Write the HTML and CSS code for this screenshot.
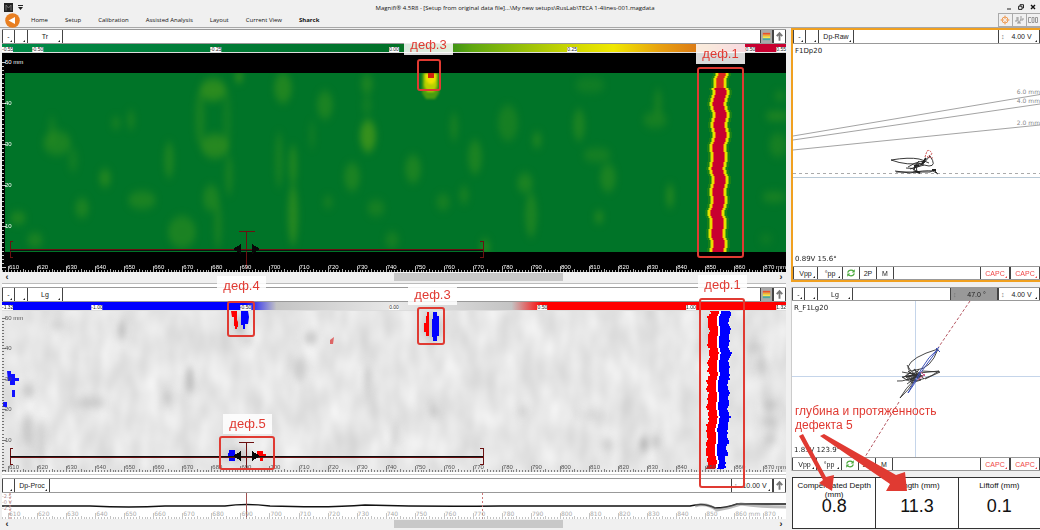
FILE: index.html
```html
<!DOCTYPE html>
<html lang="en">
<head>
<meta charset="utf-8">
<title>Magnifi 4.5R8</title>
<link rel="stylesheet" href="styles.css">
</head>
<body>
<svg class="defs" aria-hidden="true">
  <symbol id="i-up" viewBox="0 0 12 12"><path d="M6 10.5V3M3 5.5L6 2.200L9 5.500" fill="none" stroke="#777" stroke-width="2"/></symbol>
  <symbol id="i-map" viewBox="0 0 12 12"><path fill="#e8502c" d="M2 2h8v2H2z"/><path fill="#f5b02c" d="M2 4h8v2H2z"/><path fill="#f4e84a" d="M2 6h8v2H2z"/><path fill="#4aa9a0" d="M2 8h8v2H2z"/></symbol>
  <symbol id="i-sync" viewBox="0 0 12 12"><path d="M2 5.500Q3 2.500 6 2.500Q8 2.500 9.500 4M10 6.500Q9 9.500 6 9.500Q4 9.500 2.500 8" fill="none" stroke="#4aa83c" stroke-width="1.500"/><path fill="#4aa83c" d="M10.500 1.500V5.500H6.800zM1.500 10.500V6.500H5.200z"/></symbol>
</svg>
<div class="app">
  <header class="header">
    <div class="titlebar">
      <div class="quick">
        <svg class="logo" viewBox="0 0 9 9"><path fill="#222" d="M0 0h9v9H0z"/><path d="M2 7.500V2L4.500 5L7 2V7.500" fill="none" stroke="#777" stroke-width=".9"/></svg>
        <svg class="caret" viewBox="0 0 5 5"><path fill="#222" d="M0 0h5v1H0zM0 2h5L2.500 5z"/></svg>
      </div>
      <h1 class="title">Magnifi® 4.5R8 - [Setup from original data file]...\My new setups\RusLab\TECA 1-4lines-001.magdata</h1>
      <div class="window-buttons">
        <button aria-label="Minimize"><svg viewBox="0 0 6 6"><path d="M1 5h4" stroke="#222"/></svg></button>
        <button aria-label="Restore"><svg viewBox="0 0 6 6"><path d="M2 2V.7H5.500V4H4M.6 2.200H4V5.400H.6z" fill="none" stroke="#222"/></svg></button>
        <button aria-label="Close"><svg viewBox="0 0 6 6"><path d="M1 1l4 4M5 1L1 5" stroke="#111" stroke-width="1.400"/></svg></button>
      </div>
    </div>
    <nav class="menu">
      <button class="back" aria-label="Back"><svg viewBox="0 0 15 15"><circle cx="7.500" cy="7.500" r="7.300" fill="#e87f22"/><path fill="#fff" d="M3.500 7.500L10 4v7z"/></svg></button>
      <a href="#">Home</a><a href="#">Setup</a><a href="#">Calibration</a><a href="#">Assisted Analysis</a><a href="#">Layout</a><a href="#">Current View</a><a href="#" class="active">Sharck</a>
      <div class="tools">
        <button aria-label="Target"><svg viewBox="0 0 12 12"><path d="M6 1.500v9M1.500 6h9" stroke="#f0a060"/><circle cx="6" cy="6" r="3" fill="none" stroke="#ef9a50"/><circle cx="6" cy="6" r="1" fill="#fff"/></svg></button>
        <button aria-label="Signals"><svg viewBox="0 0 12 12"><path d="M2 7h2V3M5 3v4l1 2 2-4V2M8 6h2V4M4 9h4" fill="none" stroke="#999"/></svg></button>
        <button aria-label="Coils"><svg viewBox="0 0 12 12"><path d="M4 3.500H1.500v5H4M5 3.500h2v5H5zM8.500 3.500h2v5h-2z" fill="none" stroke="#999"/></svg></button>
      </div>
    </nav>
  </header>

  <main class="workspace">
    <div class="scans">
      <section class="scan scan-tr">
        <div class="toolbar">
          <button class="btn s more">-</button><button class="btn s more" aria-label="Layer"></button><button class="btn m more">Tr</button>
          <span class="grow"></span>
          <button class="btn i on" aria-label="Palette"><svg><use href="#i-map"/></svg></button><button class="btn i" aria-label="Expand"><svg><use href="#i-up"/></svg></button>
        </div>
        <div class="scale scale-tr" data-max="0.55" data-values="-0.55,-0.50,-0.25,0.00,0.25,0.50,0.55"></div>
        <div class="plot plot-dark" data-unit="870" data-top="62" data-step="41" data-height="219" data-origin="53">
          <svg class="art" id="tr" viewBox="2 53 784 219" preserveAspectRatio="none">
            <defs>
              <filter id="soft" x="-10%" y="-10%" width="120%" height="120%" color-interpolation-filters="sRGB"><feGaussianBlur stdDeviation="3 4"/></filter>
              <filter id="soft1" x="-50%" y="-50%" width="200%" height="200%" color-interpolation-filters="sRGB"><feGaussianBlur stdDeviation="1"/></filter>
              <clipPath id="field"><path d="M5 73h781v179H5z"/></clipPath>
            </defs>
            <path fill="#000" d="M2 53h784v219H2z"/>
            <path fill="#007428" d="M5 73h781v179H5z"/>
            <g clip-path="url(#field)">
              <g id="tr-spots" filter="url(#soft)" fill="#3c941c"></g>
              <g id="tr-strip" shape-rendering="crispEdges"></g>
              <g filter="url(#soft1)"><path fill="#4a9c10" d="M422 73h17v20l-4 6h-9l-4-6z"/><path fill="#b8d000" d="M424 73h13v13l-3 6h-7l-3-6z"/><path fill="#f0e000" d="M425 73h12l-1 7-3 4h-4l-3-4z"/></g>
              <path fill="#d02010" d="M428 73h6v5h-6z"/>
            </g>
            <g class="cursor"><path d="M13 241h-3v16h3M480 241h3v16h-3M246 231v38M239 231h16M10 249h473"/><path class="dark" d="M10 250h473"/><path class="arrow" d="M233 249l8-5v10zM260 249l-8-5v10z"/></g>
          </svg>
        </div>
        <div class="scrollbar"><button aria-label="Scroll left">‹</button><div class="track"><span class="thumb"></span></div><button aria-label="Scroll right">›</button></div>
      </section>

      <section class="scan scan-lg">
        <div class="toolbar">
          <button class="btn s more">-</button><button class="btn s more" aria-label="Layer"></button><button class="btn m more">Lg</button>
          <span class="grow"></span>
          <button class="btn i on" aria-label="Palette"><svg><use href="#i-map"/></svg></button><button class="btn i" aria-label="Expand"><svg><use href="#i-up"/></svg></button>
        </div>
        <div class="scale scale-lg" data-max="1.32" data-values="-1.32,-1.00,-0.50,0.00,0.50,1.00,1.32"></div>
        <div class="plot plot-light" data-unit="870" data-top="318" data-step="30.4" data-height="161" data-origin="311">
          <svg class="art" id="lg" viewBox="2 311 784 161" preserveAspectRatio="none">
            <defs>
              <filter id="grain" x="0" y="0" width="100%" height="100%" color-interpolation-filters="sRGB"><feTurbulence type="fractalNoise" baseFrequency="0.05 0.028" numOctaves="2" seed="8"/><feColorMatrix values=".15 0 0 0 .825 .15 0 0 0 .825 .15 0 0 0 .825 0 0 0 0 1"/></filter>
            </defs>
            <rect x="2" y="311" width="784" height="161" filter="url(#grain)"/>
            <g id="lg-spots" filter="url(#soft)" fill="#a0a0a0"></g>
            <g id="lg-strip" shape-rendering="crispEdges"></g>
            <path fill="#f00" d="M231 311h6v9l1 2v5h-1v2h-2v-3h-1v-9h-2zM427 312h2v24h-3v-4h-2v-9h2v-7h1zM257 451h6v3h3v3h-3v4h-3v-3h-3z"/>
            <path fill="#00f" d="M241 311h7l1 6-1 7h-3v5h-2v-4h-2zM433 312h4v4h2v20h-2v5h-4v-4h-1v-18h1zM229 450h6v11h-6v-3h-1v-5h1z"/>
            <path fill="#11f" d="M7 371h4v3h4v4h4v3h-4v4h-5v-4H8zM12 390h3v7h-3zM3 402h4v5H3z"/>
            <path fill="#d66" d="M330 340l4-3-1 7h-3z"/>
            <g class="cursor"><path d="M13 448h-3v16h3M480 448h3v16h-3M246 442v26M239 442h15M10 457h473"/><path class="dark" d="M10 456h473"/><path class="arrow" d="M233 456l8-5v10zM260 456l-8-5v10z"/></g>
          </svg>
        </div>
      </section>

      <section class="scan scan-strip">
        <div class="toolbar">
          <button class="btn s more" aria-label="Layer"></button><button class="btn m more">Dp-Proc</button>
          <span class="grow"></span>
          <label class="gain more"><span>↕</span><input aria-label="Strip gain" value="10.00 V"></label><button class="btn i" aria-label="Expand"><svg><use href="#i-up"/></svg></button>
        </div>
        <div class="plot plot-strip" data-unit="860">
          <svg class="art" viewBox="2 493 784 26" preserveAspectRatio="none">
            <path d="M2 506H90Q130 508 165 506H225Q246 503 270 506Q330 508 365 505Q430 507 500 506H690Q704 502 715 508Q726 508 737 504H786" fill="none" stroke="#111" stroke-width="1.500"/>
            <path d="M695 506Q706 502 717 510Q729 508 741 504Q760 507 786 507" fill="none" stroke="#777" opacity=".5" stroke-width="3"/>
            <path d="M246.500 493v26" stroke="#a05050"/><path d="M482.500 493v26M10 493v26" stroke="#c77" stroke-dasharray="2"/>
          </svg>
          <span class="volt">-2.5<br>-0 V<br>-2.5</span>
        </div>
        <div class="scrollbar"><button aria-label="Scroll left">‹</button><div class="track"><span class="thumb"></span></div><button aria-label="Scroll right">›</button></div>
      </section>
    </div>

    <div class="planes">
      <section class="plane selected">
        <div class="toolbar">
          <button class="btn s more">-</button><button class="btn s more" aria-label="Layer"></button><button class="btn m more">Dp-Raw</button>
          <span class="grow"></span><label class="gain more"><span>↕</span><input aria-label="Raw gain" value="4.00 V"></label>
        </div>
        <div class="lissajous lissajous-raw">
          <svg class="art" viewBox="793 44 247 222" preserveAspectRatio="none" fill="none">
            <path stroke="#999" stroke-width=".9" d="M793 136L1040 94.500M793 140L1040 104M793 150L1040 125"/>
            <path stroke="#aaa" stroke-dasharray="3 3" d="M793 173.500h247"/><path stroke="#b9c9d6" d="M793 177.500h247"/>
            <g stroke="#222" stroke-width=".9"><path d="M891 160Q909 157 919 159Q927 161 924 163Q907 166 891 160M906 168Q919 171 930 156M930 156Q937 166 929 166L919 164M908 167Q922 158 929 163M895 171L910 173Q924 170 933 171L938 174M896 172H930L934 170 937 173M914 172L915 166L919 161M917 172L916 166L913 170M924 165L910 169"/><path stroke-width="2" d="M914 166L919 165M926 158L922 164M915 171L920 173M932 170h4"/></g>
            <path stroke="#c55" stroke-dasharray="2 1" d="M925 157L927 151Q930 149 932 154L927 157L933 158"/>
          </svg>
          <strong class="caption">F1Dp20</strong><span class="readout">0.89V 15.6°</span>
          <span class="depth d6">6.0 mm</span><span class="depth d4">4.0 mm</span><span class="depth d2">2.0 mm</span>
        </div>
        <div class="toolbar foot">
          <button class="btn w more">Vpp</button><button class="btn w more">°pp</button><button class="btn t" aria-label="Refresh"><svg><use href="#i-sync"/></svg></button><button class="btn t">2P</button><button class="btn t">M</button>
          <span class="grow"></span><button class="btn c more">CAPC</button><button class="btn c more">CAPC</button>
        </div>
      </section>

      <section class="plane">
        <div class="toolbar">
          <button class="btn s more">-</button><button class="btn s more" aria-label="Layer"></button><button class="btn m more">Lg</button>
          <span class="grow"></span><label class="gain angle"><span>↕</span><input aria-label="Rotation" value="47.0 °"></label><label class="gain more"><span>↕</span><input aria-label="Gain" value="4.00 V"></label>
        </div>
        <div class="lissajous lissajous-lg">
          <svg class="art" viewBox="792 301 248 156" preserveAspectRatio="none" fill="none">
            <path stroke="#c5d5ea" d="M915.500 301v156M792 376.500h248"/>
            <path stroke="#b45560" stroke-dasharray="3 2" d="M970 301L938 348M899 402L865 457"/>
            <g stroke="#333" stroke-width=".9"><path d="M938 349Q911 357 908 367Q908 373 916 370Q931 369 938 349M897 381Q907 382 919 373L939 371Q925 381 909 381L902 377L921 374L907 384M905 377L915 369L918 378L908 371L921 380L911 383L919 369M903 378L909 373L923 376L906 380L917 371L924 379M922 371L940 372L925 379M915 379Q905 389 900 398Q908 391 916 379M911 371L907 365M913 374L902 372"/><path stroke-width="2" d="M906 377L919 374M910 380L917 376M912 373L920 377"/></g>
            <path stroke="#3c50b8" d="M938 349Q928 357 922 368L908 393Q914 385 922 371L938 349M936 348l4 4M939 347l-3 4"/><path stroke="#c58" d="M918 380L925 374M921 372l4 4"/>
          </svg>
          <strong class="caption">R_F1Lg20</strong><span class="readout">1.83V 123.9°</span>
        </div>
        <div class="toolbar foot">
          <button class="btn w more">Vpp</button><button class="btn w more">°pp</button><button class="btn t" aria-label="Refresh"><svg><use href="#i-sync"/></svg></button><button class="btn t">2P</button><button class="btn t">M</button>
          <span class="grow"></span><button class="btn c more">CAPC</button><button class="btn c more">CAPC</button>
        </div>
      </section>

      <dl class="metrics">
        <div><dt>Compensated Depth (mm)</dt><dd>0.8</dd></div>
        <div><dt>Length (mm)</dt><dd>11.3</dd></div>
        <div><dt>Liftoff (mm)</dt><dd>0.1</dd></div>
      </dl>
    </div>
  </main>

  <div class="notes" id="notes">
    <svg class="art" viewBox="0 0 1040 530" preserveAspectRatio="none" fill="#e03a32"><path d="M799 436L803 434L826 477L834 475L832 491L819 483L823 480zM820 436L824 434L896 475L905 472L907 491L886 491L890 484z"/></svg>
  </div>
</div>
<script src="app.js"></script>
</body>
</html>
```
FILE: styles.css
```css
* { box-sizing: border-box; }
body { margin: 0; background: #f0f0f0; color: #222; font: 7px/9px "Liberation Sans", Arial, sans-serif; }
button, input { font: inherit; color: inherit; border: 0; padding: 0; margin: 0; background: none; }
svg { display: block; }
.defs { position: absolute; width: 0; height: 0; }
.app { position: relative; display: flex; flex-direction: column; min-height: 100vh; overflow: hidden; }

.header { border-bottom: 1px solid #a8a8a8; font-family: "Open Sans", "Noto Sans", sans-serif; font-size: 6px; color: #111; }
.titlebar { display: grid; grid-template-columns: 1fr auto 1fr; align-items: center; height: 13px; padding: 1px 4px 0; }
.quick { display: flex; align-items: center; gap: 5px; }
.logo { width: 9px; height: 9px; }
.caret { width: 5px; height: 5px; }
.title { margin: 2px 10px 0 0; font-size: 6px; font-weight: 400; line-height: 9px; white-space: nowrap; }
.window-buttons { display: flex; justify-content: flex-end; gap: 6px; }
.window-buttons button, .window-buttons svg { width: 6px; height: 6px; }
.menu { display: flex; align-items: center; gap: 17px; height: 14px; padding-left: 5px; }
.menu a { color: inherit; text-decoration: none; white-space: nowrap; }
.menu .active { font-weight: 700; }
.back { margin-right: -6px; }
.back svg { width: 15px; height: 15px; }
.tools { display: flex; align-self: stretch; margin-left: auto; }
.tools button { width: 14px; border: 1px solid #aaa; border-right: 0; }
.tools svg { width: 12px; height: 12px; }

.workspace { flex: 1; display: grid; grid-template-columns: 784fr 249fr; gap: 5px; padding-left: 2px; }
.scans, .planes { display: flex; flex-direction: column; min-width: 0; }
.scans { padding-top: 1px; }
.scan { display: flex; flex-direction: column; background: #fff; }
.scan-tr { flex: 219 1 39px; padding-bottom: 3px; }
.scan-lg { flex: 161 1 30px; padding-bottom: 6px; background: linear-gradient(#ccc, #ccc) 0 calc(100% - 3px) / 100% 1px no-repeat #fff; }
.scan-strip { flex: 26 1 26px; }

.toolbar { display: flex; flex: none; height: 15px; background: #fff; border-top: 1px solid #999; border-bottom: 1px solid #999; }
.grow { flex: 1; }
.btn, .gain { position: relative; flex: none; display: flex; align-items: center; justify-content: center; background: #fff; border: 1px solid #444; border-width: 0 1px 0 0; }
.btn:first-child { border-left-width: 1px; }
.more::after { content: ""; position: absolute; right: 2px; bottom: 1px; border: 1px solid transparent; border-right-color: #222; border-bottom-color: #222; }
.s { width: 13px; }
.m { width: 35px; }
.w { width: 25px; }
.t { width: 17px; }
.t svg { width: 10px; height: 10px; }
.i { width: 13px; border-left-width: 1px; }
.i svg { width: 11px; height: 11px; }
.on { background: #aaa; }
.c { width: 30px; color: #f04848; border-left-width: 1px; }
.c::after { border-right-color: #f04848; border-bottom-color: #f04848; }
.gain { width: 42px; border-left-width: 1px; padding-left: 2px; }
.gain span { width: 5px; color: #777; }
.gain input { flex: 1; min-width: 0; text-align: center; padding-right: 2px; }
.angle { width: 48px; background: #999; }

.scale { position: relative; flex: none; height: 9px; border-bottom: 1px solid #ddd; }
.scale-tr { background: linear-gradient(90deg, #008a48, #007028 50%, #208018 55%, #60a810 60%, #d8dc00 74%, #f0e800 78%, #e8a010 84%, #d87018 90%, #c80030 95%); }
.scale-lg { background: linear-gradient(90deg, #00f 31%, #c4c4c4 35%, #e8e8e8 50%, #c4c4c4 65%, #f00 69%); }
.scale span { position: absolute; bottom: 0; background: #fff; color: #222; font: 5px/5px "Liberation Sans", sans-serif; transform: translateX(-50%); }
.scale span:first-child { transform: none; }
.scale span:last-child { transform: translateX(-100%); }

.plot { position: relative; flex: 1; min-height: 20px; overflow: hidden; }
.art { position: absolute; inset: 0; width: 100%; height: 100%; }
.plot-dark { color: #fff; background: #000; }
.plot-light { color: #555; background: #e5e5e5; }
.plot-strip { color: #aaa; background: #fff; }
.tick { position: absolute; bottom: 0; width: 1px; height: 2px; background: currentColor; opacity: .7; }
.tick.major { height: 6px; }
.tick.half { height: 3px; }
.num { position: absolute; bottom: 2px; padding-left: 1px; font: 6px/6px "Liberation Sans", sans-serif; white-space: nowrap; }
.plot-strip .num { font-family: "DejaVu Sans", sans-serif; }
.ytick { position: absolute; left: 0; width: 2px; height: 1px; background: currentColor; opacity: .8; }
.ytick.major { width: 4px; }
.ynum { position: absolute; left: 3px; font: 6px/6px "Liberation Sans", sans-serif; transform: translateY(-50%); }
.volt { position: absolute; left: 0; top: 0; font: 5px/6px "DejaVu Sans", sans-serif; color: #b09090; }
.cursor path { fill: none; stroke: #6b1010; stroke-width: 1; shape-rendering: crispEdges; }
.cursor .dark { stroke: #111; }
.cursor .arrow { fill: #080808; stroke: none; }

.scrollbar { flex: none; display: flex; align-items: center; height: 11px; padding: 1px 3px 2px; background: #f0f0f0; }
.scan-tr .scrollbar { height: 12px; border-bottom: 1px solid #bbb; }
.scrollbar button { width: 4px; font: 700 9px/7px "Liberation Sans", sans-serif; }
.track { flex: 1; display: grid; grid-template-columns: 50fr 22fr 28fr; }
.thumb { grid-column: 2; height: 8px; background: #c8c8c8; }

.plane { display: flex; flex-direction: column; flex: 156 1 28px; margin-bottom: 6px; background: #fff; border-left: 1px solid #ccc; }
.plane.selected { flex: 222 1 32px; margin-bottom: 5px; border: 2px solid #f0a020; border-right: 0; }
.plane .toolbar { height: 14px; border-top: 0; }
.plane .toolbar.foot { border-top: 1px solid #999; }
.plane:not(.selected) .toolbar { border-top: 1px solid #999; }
.lissajous { position: relative; flex: 1; min-height: 60px; }
.caption { position: absolute; left: 2px; top: 3px; font: 7px/9px "DejaVu Sans", sans-serif; }
.readout { position: absolute; left: 2px; bottom: 2px; font: 7px/9px "DejaVu Sans", sans-serif; }
.depth { position: absolute; right: 0; font: 6px/8px "DejaVu Sans", sans-serif; color: #888; }
.d6 { top: 20%; }
.d4 { top: 24%; }
.d2 { top: 34%; }

.metrics { flex: none; display: grid; grid-template-columns: 1fr 1fr 1fr; height: 52px; margin: 0 0 1px 1px; background: #fff; border: 1px solid #333; border-right: 0; color: #111; }
.metrics div { display: flex; flex-direction: column; align-items: center; padding: 3px 4px 0; text-align: center; }
.metrics div + div { border-left: 1px solid #333; }
.metrics dt { height: 14px; font-size: 8px; line-height: 9px; }
.metrics dd { margin: 0; font-size: 18px; line-height: 22px; }

.notes { position: absolute; inset: 0; pointer-events: none; color: #e03a32; }
.box { position: absolute; border: 2px solid #e03a32; border-radius: 3px; }
.note { position: absolute; width: 49px; height: 20px; background: rgba(255, 255, 255, .85); font-size: 13px; line-height: 20px; text-align: center; }
.note.long { width: auto; height: auto; background: none; font-size: 12px; line-height: 14px; text-align: left; white-space: pre; }
```
FILE: app.js
```js
const NS = 'http://www.w3.org/2000/svg';
const byId = id => document.getElementById(id);

function add(parent, cls, style, text = '') {
  const el = document.createElement('span');
  el.className = cls;
  el.textContent = text;
  Object.assign(el.style, style);
  parent.append(el);
}

function shape(parent, tag, attrs) {
  const el = document.createElementNS(NS, tag);
  for (const key in attrs) el.setAttribute(key, attrs[key]);
  parent.append(el);
}

document.querySelectorAll('.scale').forEach(scale => {
  const max = +scale.dataset.max;
  scale.dataset.values.split(',').forEach(v => {
    add(scale, '', { left: (+v + max) / (2 * max) * 100 + '%' }, v);
  });
});

document.querySelectorAll('.plot').forEach(plot => {
  const { unit, top, step, height, origin } = plot.dataset;
  for (let mm = 608; mm <= 876; mm++) {
    const left = (6 + (mm - 610) * 2.905) / 784 * 100 + '%';
    const kind = mm % 10 === 0 ? ' major' : mm % 5 === 0 ? ' half' : '';
    add(plot, 'tick' + kind, { left });
    if (mm % 10) continue;
    const text = mm === +unit ? mm + ' mm' : String(mm);
    add(plot, 'num', mm === 870 && +unit === 870 ? { right: 0 } : { left }, text);
  }
  if (!step) return;
  for (let mm = 50; mm >= 0; mm--) {
    const y = (+top - origin + (50 - mm) * step / 10) / height * 100;
    if (y > 99) break;
    add(plot, mm % 10 ? 'ytick' : 'ytick major', { top: y + '%' });
    if (mm % 10 === 0 && mm > 0) add(plot, 'ynum', { top: y + '%' }, mm === 50 ? '50 mm' : String(mm));
  }
});

/* Background indications: x, y, half width, half height, strength */
const trSpots = [
  [57,143,14,12,.5],[52,130,4,14,.3],[73,160,5,12,.3],[105,178,6,9,.6],[82,208,7,10,.5],[18,218,8,6,.6],[35,240,8,7,.5],
  [116,123,5,6,.4],[131,120,4,10,.4],[169,160,5,18,.5],[142,200,14,9,.5],[213,90,13,11,.8],[200,118,5,28,.4],[227,120,4,32,.3],
  [215,146,14,12,.7],[229,175,4,20,.4],[211,198,8,13,.5],[182,232,14,16,.5],[218,225,4,24,.4],[239,77,4,5,1],[283,88,9,15,.6],
  [279,160,4,28,.4],[293,165,4,20,.6],[293,215,5,30,.7],[325,105,8,14,.5],[312,135,3,14,.3],[367,84,6,10,.5],[367,105,5,10,.3],
  [368,136,8,16,1],[352,177,8,14,.5],[328,202,5,6,.4],[376,208,9,8,.4],[392,240,7,8,.4],[413,169,8,14,.5],[443,202,7,8,.4],
  [464,195,5,9,.4],[475,157,7,17,.5],[454,127,4,14,.4],[485,247,5,8,.6],[508,123,10,18,.4],[537,140,5,8,.5],[525,183,8,10,.5],
  [531,215,6,22,.5],[579,125,6,16,.5],[597,155,14,7,.4],[608,178,8,14,.5],[599,217,5,6,.6],[655,120,12,8,.4],[658,103,4,14,.4],
  [670,196,4,12,.6],[590,85,15,8,.3],[777,116,12,4,.7],[780,96,6,4,.5],[778,145,9,12,.4],[774,197,12,5,.5],[766,239,7,4,.3]
];
trSpots.forEach(([cx, cy, rx, ry, s]) => shape(byId('tr-spots'), 'ellipse', { cx, cy, rx, ry, opacity: s * .9 }));

const lgSpots = [
  [122,331,4,10,.7],[58,325,9,4,.5],[310,338,7,6,.7],[28,391,5,7,.6],[190,380,4,14,.8],[168,398,5,8,.5],[90,403,16,5,.6],
  [28,430,6,15,.5],[42,440,4,22,.4],[300,370,7,12,.4],[235,455,14,6,.7],[240,324,6,10,.7],[248,340,3,5,.7],[432,327,9,14,.6],
  [644,444,4,8,1],[656,442,4,7,.7],[608,444,5,6,.5],[757,348,8,5,.5],[762,365,6,10,.4],[770,405,7,5,.6],[769,422,8,4,.6],
  [771,440,6,5,.5],[523,411,4,6,.5],[434,411,4,6,.5],[368,380,3,16,.4],[395,435,4,12,.4],[710,330,5,12,.4],[590,415,14,4,.3]
];
lgSpots.forEach(([cx, cy, rx, ry, s]) => shape(byId('lg-spots'), 'ellipse', { cx, cy, rx, ry, opacity: s * .75 }));

const wave = y => Math.sin(y * .29) * 1.1 + Math.sin(y * .11) * .7;

/* Crack seen on the Tr channel: rows of nested colour bands */
for (let y = 73; y < 252; y++) {
  const mid = Math.round(720.5 - (y - 73) * .018 + wave(y - y % 2));
  const red = y < 88 ? 3 : 5;
  [['#188018', red + 6], ['#78b40c', red + 4], ['#e6e000', red + 3], ['#e86010', red + 1], [y < 88 ? '#d82820' : '#c80030', red]]
    .forEach(([fill, half]) => shape(byId('tr-strip'), 'rect', { x: mid - half, y, width: half * 2, height: 1, fill }));
}

/* Same crack on the Lg channel: red and blue lobes with a white seam */
for (let y = 311; y < 469; y++) {
  const row = y - y % 2;
  const mid = Math.round(720 - (row - 311) * .016 + wave(row) * .7);
  const left = 9 + Math.round(Math.sin(row * .7) * .6);
  const right = 9 + Math.round(Math.sin(row * .5 + 1) * .7) + (y > 455 ? -2 : 1);
  [['#fff', mid - 3, 5], ['#f00', mid - left - 2, left], ['#00f', mid, right]]
    .forEach(([fill, x, width]) => shape(byId('lg-strip'), 'rect', { x, y, width, height: 1, fill }));
}

/* Reviewer notes in a 1040 x 530 space */
const px = v => v / 10.4 + '%';
const py = v => v / 5.3 + '%';
[[417,59,24,32],[697,67,47,191],[227,301,28,36],[417,307,28,38],[699,298,46,190],[219,436,56,34]]
  .forEach(([x, y, w, h]) => add(byId('notes'), 'box', { left: px(x), top: py(y), width: px(w), height: py(h) }));
[[404,35,'деф.3'],[696,44,'деф.1'],[217,276,'деф.4'],[408,285,'деф.3'],[698,275,'деф.1'],[223,414,'деф.5']]
  .forEach(([x, y, t]) => add(byId('notes'), 'note', { left: px(x), top: py(y) }, t));
add(byId('notes'), 'note long', { left: px(795), top: py(404) }, 'глубина и протяженность\nдефекта 5');
```
